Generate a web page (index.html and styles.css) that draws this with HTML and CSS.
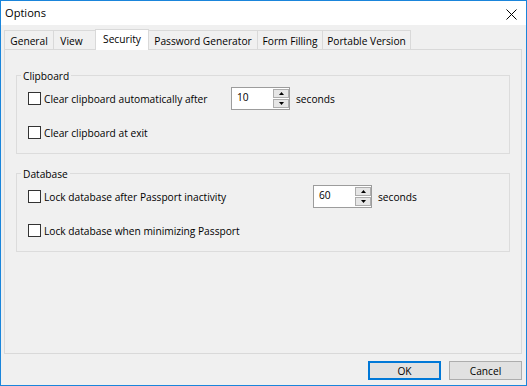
FILE: index.html
```html
<!DOCTYPE html>
<html>
<head>
<meta charset="UTF-8">
<title>Options</title>
<link rel="stylesheet" href="styles.css">
</head>
<body>
<div class="window">
  <div class="titlebar">
    <span class="title">Options</span>
    <svg class="close" width="11" height="11" viewBox="0 0 11 11"><path d="M0.5 0.5L10.5 10.5M10.5 0.5L0.5 10.5" stroke="#000" stroke-width="1" fill="none"/></svg>
  </div>
  <div class="body">
    <ul class="tabs">
      <li class="tab tab-general">General</li>
      <li class="tab tab-view">View</li>
      <li class="tab tab-security active">Security</li>
      <li class="tab tab-generator">Password Generator</li>
      <li class="tab tab-filling">Form Filling</li>
      <li class="tab tab-portable">Portable Version</li>
    </ul>
    <div class="panel">
      <div class="group group-clip">
        <div class="group-title">Clipboard</div>
        <div class="row">
          <span class="check"></span>
          <span class="label label-clip">Clear clipboard automatically after</span>
          <div class="spin">
            <span class="spin-value">10</span>
            <div class="spin-btns">
              <span class="spin-btn"><svg width="5" height="3" viewBox="0 0 5 3"><polygon points="0,3 5,3 2.5,0" fill="#000"/></svg></span>
              <span class="spin-btn"><svg width="5" height="3" viewBox="0 0 5 3"><polygon points="0,0 5,0 2.5,3" fill="#000"/></svg></span>
            </div>
          </div>
          <span class="unit">seconds</span>
        </div>
        <div class="row">
          <span class="check"></span>
          <span class="label">Clear clipboard at exit</span>
        </div>
      </div>
      <div class="group group-db">
        <div class="group-title">Database</div>
        <div class="row">
          <span class="check"></span>
          <span class="label label-lock">Lock database after Passport inactivity</span>
          <div class="spin">
            <span class="spin-value">60</span>
            <div class="spin-btns">
              <span class="spin-btn"><svg width="5" height="3" viewBox="0 0 5 3"><polygon points="0,3 5,3 2.5,0" fill="#000"/></svg></span>
              <span class="spin-btn"><svg width="5" height="3" viewBox="0 0 5 3"><polygon points="0,0 5,0 2.5,3" fill="#000"/></svg></span>
            </div>
          </div>
          <span class="unit">seconds</span>
        </div>
        <div class="row">
          <span class="check"></span>
          <span class="label">Lock database when minimizing Passport</span>
        </div>
      </div>
    </div>
    <div class="buttons">
      <button class="btn btn-default">OK</button>
      <button class="btn">Cancel</button>
    </div>
  </div>
</div>
</body>
</html>
```

FILE: styles.css
```css
*{box-sizing:border-box;}
html,body{margin:0;padding:0;background:#f0f0f0;}
body{font:10.2px/14px "Open Sans","Liberation Sans",Arial,sans-serif;color:#000;}

.window{
  width:527px;
  height:386px;
  border:1px solid #1a85db;
  display:flex;
  flex-direction:column;
  background:#f0f0f0;
}
.titlebar{
  height:24px;
  flex:none;
  background:#fff;
  display:flex;
  align-items:center;
  justify-content:space-between;
  padding:0 9px 0 4px;
}
.title{font-size:11.1px;}
.close{display:block;margin-top:2px;}

.body{
  flex:1;
  display:flex;
  flex-direction:column;
  padding:4px 4px 0 3px;
}

/* tabs */
.tabs{
  list-style:none;
  margin:0 0 -1px;
  padding:0;
  height:21px;
  display:flex;
  align-items:flex-end;
}
.tab{
  height:20px;
  margin-left:-1px;
  padding-top:3px;
  border:1px solid #d9d9d9;
  border-bottom:0;
  background:#f0f0f0;
  text-align:center;
  white-space:nowrap;
}
.tab:first-child{margin-left:0;}
.tab.active{
  height:21px;
  padding-top:2px;
  background:#fff;
  position:relative;
  z-index:1;
}
.tab-general{width:50px;}
.tab-view{width:43px;padding-right:6px;}
.tab-security{width:54px;}
.tab-generator{width:110px;}
.tab-filling{width:66px;}
.tab-portable{width:89px;}

.panel{
  height:305px;
  flex:none;
  border:1px solid #d9d9d9;
  padding:0 11px;
}

/* group boxes */
.group{
  height:79px;
  border:1px solid #dcdcdc;
  display:flex;
  flex-direction:column;
  padding-left:11px;
}
.group-clip{margin-top:25px;}
.group-db{margin-top:19px;}
.group-title{
  align-self:flex-start;
  margin:-7px 0 0 -7px;
  padding:0 2px;
  background:#f0f0f0;
}
.row{
  height:23px;
  display:flex;
  align-items:center;
  margin-top:11px;
}
.group-title + .row{margin-top:4px;}

.check{
  width:13px;
  height:13px;
  border:1px solid #333;
  background:#fff;
  flex:none;
}
.label{margin-left:3px;white-space:nowrap;}
.label-clip{width:187px;}
.label-lock{width:269px;}

/* spin edit */
.spin{
  width:59px;
  height:23px;
  border:1px solid #9c9c9c;
  background:#fff;
  display:flex;
}
.spin-value{flex:1;padding-left:5px;line-height:19px;}
.spin-btns{
  display:flex;
  flex-direction:column;
  gap:1px;
  padding:1px 0;
}
.spin-btn{
  width:16px;
  height:9px;
  border:1px solid #adadad;
  background:#e6e6e6;
  display:flex;
  align-items:center;
  justify-content:center;
}
.spin-btn svg{display:block;}
.unit{margin-left:6px;}

/* dialog buttons */
.buttons{
  display:flex;
  justify-content:flex-end;
  gap:8px;
  margin-top:7px;
}
.btn{
  width:73px;
  height:19px;
  margin:0;
  padding:0;
  border:1px solid #adadad;
  background:#e1e1e1;
  font:inherit;
  color:#000;
}
.btn-default{border:2px solid #0078d7;}
```
